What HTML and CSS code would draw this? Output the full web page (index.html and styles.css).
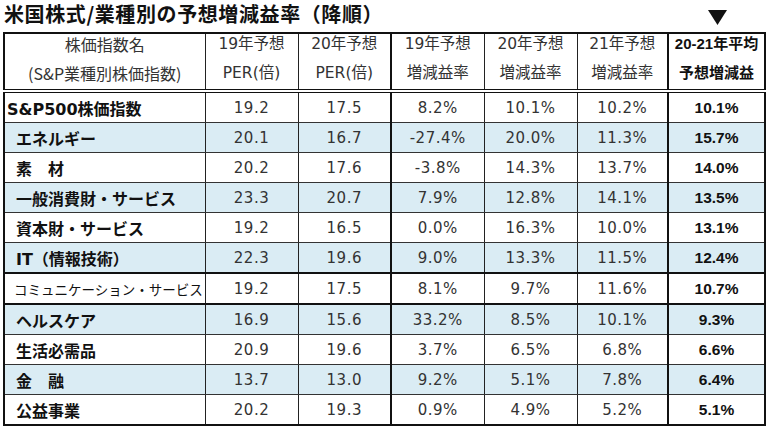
FILE: index.html
```html
<!DOCTYPE html>
<html lang="ja">
<head>
<meta charset="utf-8">
<link rel="stylesheet" href="styles.css">
</head>
<body>
<div class="page">
  <div class="titlebar">
    <h1 class="title">米国株式/業種別の予想増減益率（降順）</h1>
    <svg class="marker" width="19" height="15" viewBox="0 0 19 15"><polygon points="0,0 19,0 9.5,15" fill="#111"/></svg>
  </div>
  <table class="grid">
    <colgroup>
      <col class="c-name"><col class="c-num"><col class="c-num"><col class="c-num"><col class="c-num"><col class="c-num6"><col class="c-avg">
    </colgroup>
    <thead>
      <tr class="h1">
        <th class="hname">株価指数名</th>
        <th>19年予想</th>
        <th>20年予想</th>
        <th class="sep">19年予想</th>
        <th>20年予想</th>
        <th>21年予想</th>
        <th class="avg">20-21年平均</th>
      </tr>
      <tr class="h2">
        <th class="hname">(S&amp;P業種別株価指数)</th>
        <th>PER(倍)</th>
        <th>PER(倍)</th>
        <th class="sep">増減益率</th>
        <th>増減益率</th>
        <th>増減益率</th>
        <th class="avg">予想増減益</th>
      </tr>
    </thead>
    <tbody>
      <tr><td class="name sp">S&amp;P500株価指数</td><td>19.2</td><td>17.5</td><td class="sep">8.2%</td><td>10.1%</td><td>10.2%</td><td class="avg">10.1%</td></tr>
      <tr class="blue"><td class="name">エネルギー</td><td>20.1</td><td>16.7</td><td class="sep">-27.4%</td><td>20.0%</td><td>11.3%</td><td class="avg">15.7%</td></tr>
      <tr><td class="name">素　材</td><td>20.2</td><td>17.6</td><td class="sep">-3.8%</td><td>14.3%</td><td>13.7%</td><td class="avg">14.0%</td></tr>
      <tr class="blue"><td class="name">一般消費財・サービス</td><td>23.3</td><td>20.7</td><td class="sep">7.9%</td><td>12.8%</td><td>14.1%</td><td class="avg">13.5%</td></tr>
      <tr><td class="name">資本財・サービス</td><td>19.2</td><td>16.5</td><td class="sep">0.0%</td><td>16.3%</td><td>10.0%</td><td class="avg">13.1%</td></tr>
      <tr class="blue"><td class="name">IT（情報技術）</td><td>22.3</td><td>19.6</td><td class="sep">9.0%</td><td>13.3%</td><td>11.5%</td><td class="avg">12.4%</td></tr>
      <tr class="thick"><td class="name thin">コミュニケーション・サービス</td><td>19.2</td><td>17.5</td><td class="sep">8.1%</td><td>9.7%</td><td>11.6%</td><td class="avg">10.7%</td></tr>
      <tr class="blue thick"><td class="name">ヘルスケア</td><td>16.9</td><td>15.6</td><td class="sep">33.2%</td><td>8.5%</td><td>10.1%</td><td class="avg">9.3%</td></tr>
      <tr><td class="name">生活必需品</td><td>20.9</td><td>19.6</td><td class="sep">3.7%</td><td>6.5%</td><td>6.8%</td><td class="avg">6.6%</td></tr>
      <tr class="blue"><td class="name">金　融</td><td>13.7</td><td>13.0</td><td class="sep">9.2%</td><td>5.1%</td><td>7.8%</td><td class="avg">6.4%</td></tr>
      <tr><td class="name">公益事業</td><td>20.2</td><td>19.3</td><td class="sep">0.9%</td><td>4.9%</td><td>5.2%</td><td class="avg">5.1%</td></tr>
    </tbody>
  </table>
</div>
</body>
</html>
```
FILE: styles.css
```css
html, body {
  margin: 0;
  padding: 0;
  background: #fff;
}
.page {
  width: 773px;
  height: 427px;
  overflow: hidden;
  font-family: "DejaVu Sans", "Noto Sans CJK JP", sans-serif;
  color: #2a2a2a;
}
.titlebar {
  display: flex;
  align-items: flex-start;
  justify-content: space-between;
  height: 32px;
  padding-left: 4px;
  padding-right: 46px;
  box-sizing: border-box;
}
.title {
  flex: 0 0 auto;
  white-space: nowrap;
  margin: 0;
  padding: 0 2px 0 0;
  font-family: "Noto Sans CJK JP", sans-serif;
  font-weight: 700;
  font-size: 20px;
  line-height: 28px;
  height: 30px;
  color: #111;
  letter-spacing: 0.6px;
}
.marker {
  display: block;
  margin-top: 10px;
}
.grid {
  margin-left: 3px;
  border-collapse: collapse;
  table-layout: fixed;
  width: 761px;
  border: 2px solid #111;
}
.c-name { width: 201px; }
.c-num { width: 93px; }
.c-num6 { width: 91px; }
.c-avg { width: 97px; }
th, td {
  padding: 0;
  text-align: center;
  white-space: nowrap;
  overflow: hidden;
  border-left: 1px solid #222;
}
th {
  font-family: "DejaVu Sans", "Noto Sans CJK JP", sans-serif;
  font-weight: 400;
  font-size: 15.5px;
  line-height: 20px;
  vertical-align: top;
  color: #333;
}
.h1 th {
  height: 28px;
  padding-top: 0;
}
.h2 th {
  height: 26px;
  padding-top: 1px;
  border-bottom: 4px double #111;
}
.hname {
  font-family: "Noto Sans CJK JP", sans-serif;
  font-size: 16px;
}
th.avg {
  font-family: "Liberation Sans", "Noto Sans CJK JP", sans-serif;
  font-weight: 700;
  font-size: 15px;
  color: #111;
}
td {
  height: 29px;
  vertical-align: middle;
  font-size: 15px;
  color: #333;
  letter-spacing: 0.5px;
  border-bottom: 1px solid #333;
}
.sep { border-left: 2px solid #111; }
.avg { border-left: 2px solid #111; }
td.avg {
  font-family: "Liberation Sans", "Noto Sans CJK JP", sans-serif;
  font-weight: 700;
  font-size: 15.5px;
  letter-spacing: 0;
  color: #111;
}
td.name {
  text-align: left;
  padding-left: 11px;
  font-family: "DejaVu Sans", "Noto Sans CJK JP", sans-serif;
  font-weight: 700;
  font-size: 16px;
  letter-spacing: 0;
  color: #111;
}
td.name.sp { padding-left: 2px; }
td.name.thin {
  font-weight: 400;
  font-size: 13.5px;
  padding-left: 9px;
  font-family: "Noto Sans CJK JP", sans-serif;
}
.blue td { background: #daecf4; }
tr.thick td { border-top: 2px solid #111; }
```
